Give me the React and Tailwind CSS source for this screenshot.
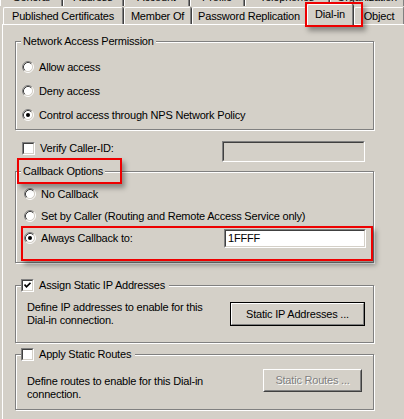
import React from 'react';

// Classic Windows "Dial-in" property page (user account properties)

const RED = 'border-2 border-[#ee0000] shadow-[3px_4px_5px_rgba(0,0,0,0.35)]';

function Radio({ checked }) {
  return (
    <svg width="12" height="12" viewBox="0 0 12 12" className="shrink-0">
      <circle cx="6" cy="6" r="4.5" fill="#fff" />
      <path d="M2.11 9.89 A5.5 5.5 0 0 1 9.89 2.11" fill="none" stroke="#808080" />
      <path d="M9.89 2.11 A5.5 5.5 0 0 1 2.11 9.89" fill="none" stroke="#fff" />
      <path d="M2.82 9.18 A4.5 4.5 0 0 1 9.18 2.82" fill="none" stroke="#404040" />
      <path d="M9.18 2.82 A4.5 4.5 0 0 1 2.82 9.18" fill="none" stroke="#d4d0c8" />
      {checked && <circle cx="6" cy="6" r="2" fill="#000" />}
    </svg>
  );
}

function Checkbox({ checked }) {
  return (
    <div className="w-[13px] h-[13px] shrink-0 border border-t-[#808080] border-l-[#808080] border-b-white border-r-white">
      <div className="w-full h-full bg-white border border-t-[#404040] border-l-[#404040] border-b-[#d4d0c8] border-r-[#d4d0c8] flex items-center justify-center">
        {checked && (
          <svg width="7" height="7" viewBox="0 0 7 7">
            <path d="M0.5 2.5 L2.5 4.8 L6.5 0.8" fill="none" stroke="#000" strokeWidth="1.7" />
          </svg>
        )}
      </div>
    </div>
  );
}

function Sunken({ className, children }) {
  return (
    <div className={`border border-t-[#808080] border-l-[#808080] border-b-white border-r-white ${className}`}>
      <div className="w-full h-full border border-t-[#404040] border-l-[#404040] border-b-[#d4d0c8] border-r-[#d4d0c8] flex items-center pl-[2px]">
        {children}
      </div>
    </div>
  );
}

function Tab({ className, children }) {
  return (
    <div className={`h-full shrink-0 border-l border-t border-white border-r border-r-[#808080] shadow-[1px_0_0_#404040] rounded-t-[2px] flex items-center justify-center whitespace-nowrap ${className}`}>
      {children}
    </div>
  );
}

function RadioRow({ checked, label, h = 'h-[24px]', children }) {
  return (
    <div className={`flex items-center gap-[5px] ${h}`}>
      <Radio checked={checked} />
      <span className="whitespace-nowrap">{label}</span>
      {children}
    </div>
  );
}

const groupBox = 'relative w-[359px] border border-[#808080] shadow-[inset_1px_1px_0_#fff,1px_1px_0_#fff]';

export default function App() {
  return (
    <div className="w-[404px] h-[419px] overflow-hidden bg-[#d4d0c8] text-black text-[11px] leading-[13px] tracking-[-0.2px] font-['Liberation_Sans',Arial,sans-serif]">
      {/* upper row of tabs, mostly cut off */}
      <div className="flex gap-px h-[18px] -mt-[12px]">
        <Tab className="w-[62px]">General</Tab>
        <Tab className="w-[60px]">Address</Tab>
        <Tab className="w-[65px]">Account</Tab>
        <Tab className="w-[54px]">Profile</Tab>
        <Tab className="w-[84px]">Telephones</Tab>
        <Tab className="w-[74px]">Organization</Tab>
      </div>

      {/* front row of tabs */}
      <div className="flex gap-px h-[17px] ml-[3px] mt-px">
        <Tab className="w-[120px]">Published Certificates</Tab>
        <Tab className="w-[67px]">Member Of</Tab>
        <Tab className="w-[114px]">Password Replication</Tab>
        <div className="relative z-10 w-[54px] h-[21px] -mt-[3px] bg-[#d4d0c8] border-l border-t border-white border-r border-r-[#808080] shadow-[1px_0_0_#404040] rounded-t-[2px] flex justify-center pt-[3px]">
          Dial-in
          <div className={`absolute -left-[3px] -top-[3px] w-[58px] h-[25px] ${RED}`}></div>
        </div>
        <Tab className="w-[50px]">Object</Tab>
      </div>

      {/* page */}
      <div className="ml-[2px] h-full border-l border-t border-white pt-[16px] pl-[12px]">
        {/* Network Access Permission */}
        <div className={`${groupBox} pt-[13px] pb-[2px] pl-[6px]`}>
          <span className="absolute left-[5px] -top-[7px] px-[2px] bg-[#d4d0c8] whitespace-nowrap">Network Access Permission</span>
          <RadioRow label="Allow access" />
          <RadioRow label="Deny access" />
          <RadioRow checked label="Control access through NPS Network Policy" />
        </div>

        {/* Verify Caller-ID */}
        <div className="flex w-[359px] h-[21px] mt-[11px] pl-[7px] pr-[9px]">
          <div className="flex items-center gap-[5px] h-[13px] mt-px">
            <Checkbox />
            <span>Verify Caller-ID:</span>
          </div>
          <Sunken className="ml-auto w-[143px] h-[21px] bg-[#d4d0c8]" />
        </div>

        {/* Callback Options */}
        <div className={`${groupBox} mt-[9px] pt-[11px] pb-[13px] pl-[8px] pr-[7px]`}>
          <span className="absolute left-[5px] -top-[7px] px-[2px] bg-[#d4d0c8] whitespace-nowrap">Callback Options</span>
          <div className={`absolute left-[1px] -top-[14px] w-[105px] h-[26px] ${RED}`}></div>
          <RadioRow h="h-[22px]" label="No Callback" />
          <RadioRow h="h-[22px]" label="Set by Caller (Routing and Remote Access Service only)" />
          <RadioRow h="h-[22px]" checked label="Always Callback to:">
            <Sunken className="ml-auto w-[142px] h-[19px] bg-white">1FFFF</Sunken>
          </RadioRow>
          <div className={`absolute left-[5px] top-[54px] w-[352px] h-[35px] ${RED}`}></div>
        </div>

        {/* Assign Static IP Addresses */}
        <div className={`${groupBox} mt-[22px] flex items-center pt-[15px] pb-[15px] pl-[11px] pr-[8px]`}>
          <div className="absolute left-[5px] -top-[7px] h-[13px] flex items-center gap-[5px] pr-[4px] bg-[#d4d0c8]">
            <Checkbox checked />
            <span className="whitespace-nowrap">Assign Static IP Addresses</span>
          </div>
          <p>
            Define IP addresses to enable for this
            <br />
            Dial-in connection.
          </p>
          <div className="ml-auto w-[135px] h-[24px] border border-black">
            <div className="w-full h-full border border-t-white border-l-white border-b-[#808080] border-r-[#808080] flex items-center justify-center">
              Static IP Addresses ...
            </div>
          </div>
        </div>

        {/* Apply Static Routes */}
        <div className={`${groupBox} mt-[11px] flex items-start pb-[8px] pl-[11px] pr-[11px]`}>
          <div className="absolute left-[5px] -top-[7px] h-[13px] flex items-center gap-[5px] pr-[4px] bg-[#d4d0c8]">
            <Checkbox />
            <span className="whitespace-nowrap">Apply Static Routes</span>
          </div>
          <p className="mt-[20px]">
            Define routes to enable for this Dial-in
            <br />
            connection.
          </p>
          <div className="ml-auto mt-[14px] w-[99px] h-[23px] border border-t-white border-l-white border-b-[#404040] border-r-[#404040]">
            <div className="w-full h-full border border-transparent border-b-[#808080] border-r-[#808080] flex items-center justify-center text-[#808080] [text-shadow:1px_1px_0_#fff]">
              Static Routes ...
            </div>
          </div>
        </div>
      </div>
    </div>
  );
}
